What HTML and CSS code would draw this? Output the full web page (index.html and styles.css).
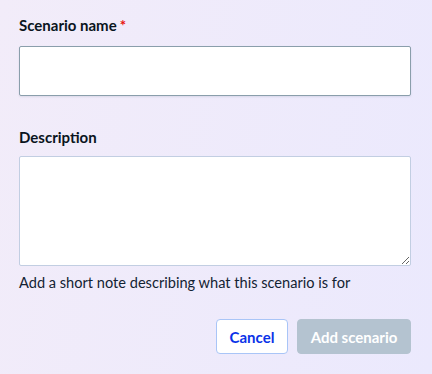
FILE: index.html
```html
<!DOCTYPE html>
<html lang="en">

<head>
  <meta charset="UTF-8">
  <meta name="viewport" content="width=device-width, initial-scale=1.0">
  <title>Add scenario</title>
  <link rel="stylesheet" href="styles.css">
</head>

<body>

  <form class="scenario-form">
    <!-- Scenario name (required) -->
    <div class="field">
      <label for="scenarioName">Scenario name<span class="required">*</span></label>
      <input type="text" id="scenarioName" class="text-input">
    </div>

    <!-- Description with hint -->
    <div class="field field-description">
      <label for="scenarioDesc">Description</label>
      <textarea id="scenarioDesc" class="text-area"></textarea>
      <p class="hint">Add a short note describing what this scenario is for</p>
    </div>

    <!-- Form actions -->
    <div class="actions">
      <button type="button" class="btn btn-secondary">Cancel</button>
      <button type="submit" class="btn btn-primary" disabled>Add scenario</button>
    </div>
  </form>

</body>

</html>
```

FILE: styles.css
```css
/* Global reset */
* {
  margin: 0;
  padding: 0;
  box-sizing: border-box;
}

body {
  font-family: 'Lato', 'Noto Sans', sans-serif;
  background: linear-gradient(100deg, #f2ecf9, #ebe9fd);
  color: #0f1b2a;
  min-height: 100vh;
}

/* Form container */
.scenario-form {
  padding: 15px 21px 0 19px;
}

.field label {
  display: block;
  font-size: 15px;
  font-weight: bold;
  line-height: 20px;
  margin-bottom: 11px;
  color: #0a1420;
}

.required {
  color: #e8120c;
  margin-left: 3px;
}

/* Single line input */
.text-input {
  display: block;
  width: 100%;
  height: 50px;
  border: 1px solid #8a9eab;
  border-radius: 2px;
  background-color: #fff;
  box-shadow: 0 1px 2px rgba(60, 80, 110, 0.12);
  font: inherit;
}

.field-description {
  margin-top: 31px;
}

.field-description label {
  margin-bottom: 9px;
}

/* Multi line input */
.text-area {
  display: block;
  width: 100%;
  height: 110px;
  border: 1px solid #c2cee2;
  border-radius: 2px;
  background-color: #fff;
  font: inherit;
  resize: vertical;
}

.hint {
  font-size: 14.6px;
  line-height: 20px;
  margin-top: 7px;
  color: #132333;
}

/* Buttons */
.actions {
  display: flex;
  justify-content: flex-end;
  gap: 9px;
  margin-top: 26px;
}

.btn {
  height: 35px;
  padding: 0 10px;
  border-radius: 4px;
  font-family: inherit;
  font-size: 15px;
  font-weight: bold;
}

.btn-secondary {
  background-color: #fff;
  border: 1px solid #a9c5f7;
  color: #0a32e8;
  width: 72px;
}

.btn-primary {
  background-color: #b4c3d0;
  border: 1px solid #b4c3d0;
  color: #fff;
  width: 114px;
}
```
